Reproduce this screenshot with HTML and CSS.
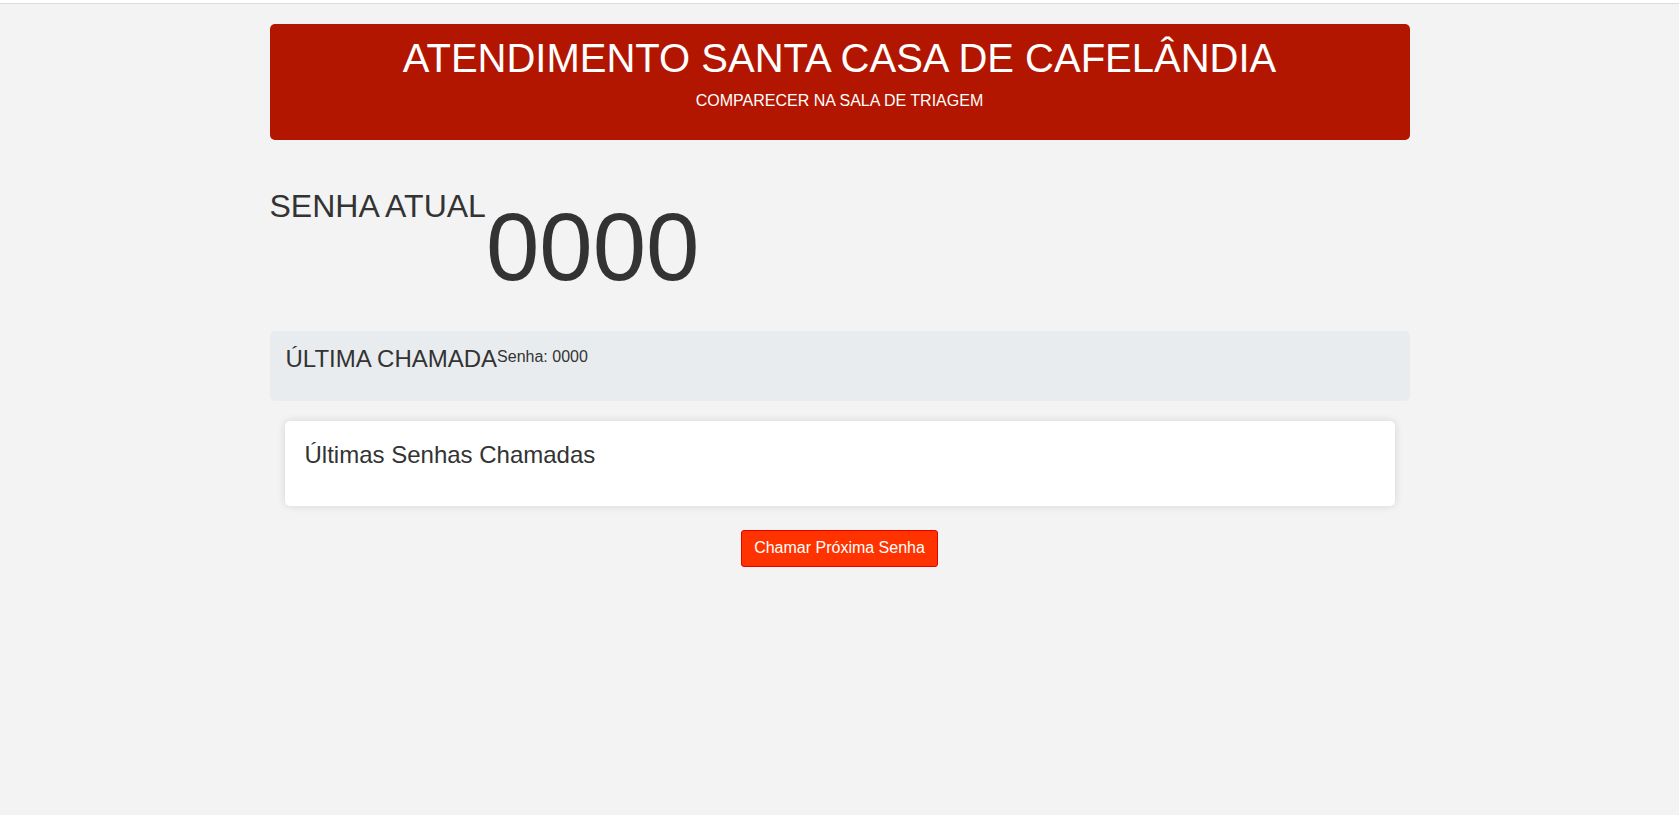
FILE: index.html
```html
<!DOCTYPE html>
<html lang="pt-BR">
<head>
<meta charset="utf-8">
<title>Atendimento Santa Casa de Cafelândia</title>
<link rel="stylesheet" href="styles.css">
</head>
<body>
<div class="topbar"></div>
<main class="container">
  <header class="banner">
    <h1 class="banner-title">ATENDIMENTO SANTA CASA DE CAFELÂNDIA</h1>
    <p class="banner-sub">COMPARECER NA SALA DE TRIAGEM</p>
  </header>

  <section class="current">
    <h2 class="current-label">SENHA ATUAL</h2>
    <div class="current-number">0000</div>
  </section>

  <section class="last-call">
    <h4 class="last-title">ÚLTIMA CHAMADA</h4>
    <p class="last-value">Senha: 0000</p>
  </section>

  <section class="history-card">
    <h4 class="history-title">Últimas Senhas Chamadas</h4>
  </section>

  <div class="actions">
    <button class="btn-next" type="button">Chamar Próxima Senha</button>
  </div>
</main>
</body>
</html>
```

FILE: styles.css
```css
* { box-sizing: border-box; }

html, body {
  margin: 0;
  padding: 0;
}

body {
  background: #f3f3f3;
  color: #333333;
  font-family: "Liberation Sans", Arial, Helvetica, sans-serif;
  font-size: 16px;
  line-height: 1.5;
  min-height: 815px;
}

.topbar {
  height: 4px;
  background: #ffffff;
  border-bottom: 1px solid #dcdcdc;
}

.container {
  width: 1140px;
  margin: 20px auto 0;
}

.banner {
  background: #b31600;
  color: #ffffff;
  border-radius: 5px;
  text-align: center;
  padding: 10px 0 11px;
}

.banner-title {
  margin: 0 0 7px;
  font-size: 40px;
  font-weight: 400;
  line-height: 1.2;
}

.banner-sub {
  margin: 0 0 16px;
  font-size: 16px;
  line-height: 1.5;
}

.current {
  display: flex;
  align-items: flex-start;
  margin-top: 47px;
}

.current-label {
  margin: 0;
  font-size: 32px;
  font-weight: 400;
  line-height: 1.2;
}

.current-number {
  margin-top: 2px;
  font-size: 96px;
  font-weight: 300;
  line-height: 1.2;
}

.last-call {
  display: flex;
  align-items: flex-start;
  margin-top: 27px;
  background: #e9ecef;
  border-radius: 5px;
  padding: 14px 16px 0;
  height: 70px;
}

.last-title {
  margin: 0;
  font-size: 24px;
  font-weight: 400;
  line-height: 1.2;
}

.last-value {
  margin: 0;
  font-size: 16px;
  line-height: 1.5;
}

.history-card {
  margin: 20px 15px 0;
  background: #ffffff;
  border-radius: 5px;
  box-shadow: 0 0 8px rgba(0, 0, 0, 0.12);
  padding: 20px 20px 0;
  height: 85px;
}

.history-title {
  margin: 0;
  font-size: 24px;
  font-weight: 400;
  line-height: 1.2;
}

.actions {
  display: flex;
  justify-content: center;
  margin-top: 24px;
}

.btn-next {
  font-family: "Liberation Sans", Arial, Helvetica, sans-serif;
  font-size: 16px;
  line-height: 24px;
  color: #ffffff;
  background: #ff3300;
  border: 1px solid #e60000;
  border-radius: 3px;
  padding: 5px 12px 6px;
  cursor: pointer;
}
```
